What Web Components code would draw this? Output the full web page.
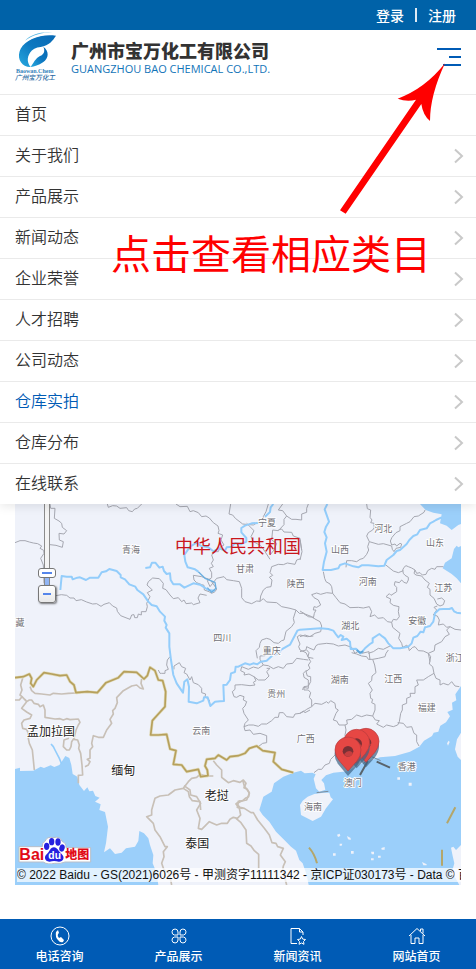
<!DOCTYPE html>
<html lang="zh-CN">
<head>
<meta charset="utf-8">
<meta name="viewport" content="width=device-width, initial-scale=1">
<title>广州市宝万化工有限公司</title>
<style>
    body{
        margin: 0;
        background: #fff;
        color: #333;
        font-family: "Liberation Sans", "Noto Sans CJK SC", sans-serif;
        font-size: 16px;
    }
</style>
</head>
<body>
<site-page>
    <top-bar slot="top"></top-bar>
    <site-header slot="header"></site-header>
    <site-menu slot="menu">
        <menu-item plain>首页</menu-item>
        <menu-item>关于我们</menu-item>
        <menu-item>产品展示</menu-item>
        <menu-item>新闻动态</menu-item>
        <menu-item>企业荣誉</menu-item>
        <menu-item>人才招聘</menu-item>
        <menu-item>公司动态</menu-item>
        <menu-item active>仓库实拍</menu-item>
        <menu-item>仓库分布</menu-item>
        <menu-item>在线联系</menu-item>
    </site-menu>
    <area-map></area-map>
    <tab-bar slot="tabs"></tab-bar>
    <guide-note slot="note">点击查看相应类目</guide-note>
</site-page>

<script>
class BaseElement extends HTMLElement{
    constructor(){
        super();
        this.attachShadow({mode: 'open'});
    }
    connectedCallback(){
        const template = document.createElement('template');
        template.innerHTML = `<style>${this.getStyles()}</style>${this.getTemplate()}`;
        this.shadowRoot.replaceChildren(template.content.cloneNode(true));
    }
}

class SitePage extends BaseElement{
    getTemplate(){
        return `
            <slot name="top"></slot>
            <slot name="header"></slot>
            <slot name="menu"></slot>
            <main><slot></slot></main>
            <slot name="tabs"></slot>
            <slot name="note"></slot>
        `;
    }
    getStyles(){
        return `
            :host{
                display: flex;
                flex-direction: column;
                position: relative;
                min-height: 100vh;
            }
            main{
                flex: 1;
                padding: 0 15px 16px;
            }
        `;
    }
}

class TopBar extends BaseElement{
    getTemplate(){
        return `<a href="#login">登录</a><i></i><a href="#register">注册</a>`;
    }
    getStyles(){
        return `
            :host{
                display: flex;
                justify-content: flex-end;
                align-items: center;
                gap: 11px;
                height: 30px;
                padding: 0 20px;
                background: #0062a8;
                font-size: 14px;
                font-weight: 500;
            }
            a{
                color: #fff;
                text-decoration: none;
            }
            i{
                width: 2px;
                height: 14px;
                background: #dfeaf4;
            }
        `;
    }
}

class SiteHeader extends BaseElement{
    getTemplate(){
        return `
            <a href="#home">
                <svg width="42" height="54" viewBox="42 87 126 162" aria-hidden="true">
                    <defs>
                        <linearGradient id="wing" x1="0" y1="1" x2="1" y2="0">
                            <stop offset="0" stop-color="#27a9df"/>
                            <stop offset=".5" stop-color="#0d78c0"/>
                            <stop offset="1" stop-color="#0869b4"/>
                        </linearGradient>
                    </defs>
                    <path fill="url(#wing)" d="M168 104C120 98 78 116 62 143C50 168 60 190 82 197L92 198C82 186 80 170 90 155C96 145 108 139 122 138C148 133 158 119 168 104Z"/>
                    <path fill="#55b5e2" d="M75 119C92 100 122 91 158 94C124 94 98 103 75 119Z"/>
                    <path fill="none" stroke="#fff" stroke-width="2" d="M84 118C108 103 138 98 165 101"/>
                    <path fill="url(#wing)" d="M130 137C148 151 147 171 129 184C116 193 103 197 92 198C100 187 107 171 120 165C132 160 136 150 130 137Z"/>
                    <text x="104" y="216" text-anchor="middle" font-family="Liberation Serif" font-weight="700" font-size="18" fill="#3382bb">Baowan.Chem</text>
                    <text x="105" y="237" text-anchor="middle" font-size="20" font-style="italic" font-weight="500" fill="#2467a2">广州宝万化工</text>
                </svg>
                <span class="name">
                    <strong>广州市宝万化工有限公司</strong>
                    <span>GUANGZHOU BAO CHEMICAL CO.,LTD.</span>
                </span>
            </a>
            <button aria-label="菜单"><i></i><i></i><i></i></button>
        `;
    }
    getStyles(){
        return `
            :host{
                display: flex;
                justify-content: space-between;
                align-items: center;
                height: 64px;
                padding: 0 15px 0 14px;
            }
            a{
                display: flex;
                gap: 15px;
                height: 56px;
                text-decoration: none;
                margin-bottom: 8px;
            }
            .name{
                display: flex;
                flex-direction: column;
                padding-top: 12px;
                white-space: nowrap;
            }
            strong{
                color: #333;
                font-size: 18px;
                font-weight: 900;
                line-height: 20px;
            }
            .name span{
                color: #1274b8;
                font-family: "Open Sans", sans-serif;
                font-size: 11px;
                font-weight: 500;
                line-height: 14px;
            }
            button{
                display: flex;
                flex-direction: column;
                align-items: flex-end;
                gap: 6px;
                width: 24px;
                padding: 0;
                border: 0;
                margin-bottom: 10px;
                background: none;
            }
            i{
                width: 18px;
                height: 2px;
                background: #005bb5;
            }
            i:nth-child(1){
                width: 24px;
            }
            i:nth-child(2){
                width: 12px;
            }
        `;
    }
}

class SiteMenu extends BaseElement{
    getTemplate(){
        return `<nav><slot></slot></nav>`;
    }
    getStyles(){
        return `
            :host{
                display: block;
                position: relative;
                z-index: 1;
                background: #fff;
                box-shadow: 0 2px 10px rgba(0, 0, 0, .1);
                clip-path: inset(0 0 -20px 0);
            }
        `;
    }
}

class MenuItem extends BaseElement{
    getTemplate(){
        return `
            <a href="#page">
                <slot></slot>
                <svg width="10" height="16" viewBox="0 0 10 16" aria-hidden="true">
                    <path d="M1 1.500L8 8L1 14.500" fill="none" stroke="#c9c9c9" stroke-width="2"/>
                </svg>
            </a>
        `;
    }
    getStyles(){
        return `
            :host{
                display: block;
                border-top: 1px solid #eaeaea;
            }
            a{
                display: flex;
                justify-content: space-between;
                align-items: center;
                height: 40px;
                padding: 0 12px 0 15px;
                color: #333;
                font-weight: 350;
                line-height: 22px;
                text-decoration: none;
            }
            :host([plain]) svg{
                display: none;
            }
            :host([active]) a{
                color: #005bb5;
            }
        `;
    }
}

// the map drawing uses three units to one pixel
const PLACES = [
    ['青海', 393, 1648], ['藏', 60, 1867], ['宁夏', 801, 1567], ['甘肃', 735, 1705],
    ['陕西', 887, 1752], ['四川', 667, 1914], ['重庆', 815, 1953], ['河北', 1150, 1587],
    ['山东', 1305, 1627], ['山西', 1020, 1648], ['河南', 1103, 1744], ['江苏', 1330, 1763],
    ['湖北', 1051, 1878], ['安徽', 1252, 1862], ['贵州', 829, 2081], ['云南', 604, 2193],
    ['湖南', 1019, 2040], ['江西', 1180, 2036], ['浙江', 1364, 1974], ['福建', 1280, 2122],
    ['广西', 917, 2217], ['香港', 1220, 2300], ['澳门', 1058, 2349], ['海南', 939, 2421]
];
const COUNTRIES = [
    ['孟加拉国', 153, 2195], ['缅甸', 370, 2311], ['老挝', 650, 2386], ['泰国', 592, 2531]
];
const PINS = [[1098, 2290], [1070, 2293], [1044, 2316]];
const FRONTIER = 'M45 2033L70 2030L88 2022L95 2035L92 2050L100 2060L110 2040L132 2018L155 2022L180 2027L200 2025L210 2045L222 2055L228 2078L262 2075L292 2078L318 2048L355 2033L372 2015L410 2017L432 2037L442 2027L450 2002L465 2012L475 2040L488 2042L497 2075L495 2120L475 2142L457 2162L452 2205L475 2205L500 2203L510 2247L528 2252L520 2293L545 2295L560 2315L595 2308L602 2330L624 2327L622 2310L615 2298L620 2278L645 2275L655 2265L680 2280L690 2270L715 2267L735 2260L748 2245L770 2238L788 2252L825 2258L820 2285L845 2308L880 2318';

class AreaMap extends BaseElement{
    getLabels(list, size){
        return list.map(([name, x, y]) =>
            `<text x="${x}" y="${y + Math.round(size * .36)}" font-size="${size}">${name}</text>`
        ).join('');
    }
    getPins(){
        return PINS.map(([x, y]) => `
            <g transform="translate(${x} ${y})">
                <path d="M0 12L-30 -24Q-42 -40 -40 -58A38 38 0 0 1 39 -52Q40 -35 26 -17Z" fill="#3f6483" opacity=".7"/>
                <path d="M0 -3L-25 -32Q-39 -48 -39 -66A39 39 0 0 1 39 -66Q39 -48 26 -32Z" fill="#e64744" stroke="#b53b3e" stroke-width="2"/>
                <circle cy="-62" r="16" fill="#793035"/>
                <path d="M-12 -53Q2 -70 15 -57Q12 -46 0 -46Q-8 -46 -12 -53Z" fill="#c43e3f"/>
            </g>`).join('');
    }
    getTemplate(){
        return `
            <svg class="map" viewBox="45 1512 1338 1143" role="img" aria-label="地图">
                <rect x="45" y="1512" width="1338" height="1143" fill="#eff2fa"/>
                <g fill="#9bcffa">
                    <path transform="translate(0 1950)" d="M45 357L60 353V363L100 362L122 350L132 354L152 346L163 351L178 345L185 335L196 318L208 324L214 345L218 372L232 380L238 405L252 423L262 412L268 424L279 422L286 438L299 443L285 455L302 463L298 480L315 486L324 530L318 580L312 607L330 595L345 612L365 608L378 595L405 590L415 573L418 543L432 550L445 565L450 585L460 615L458 640L470 670L475 705H45Z"/>
                    <path transform="translate(900 1500)" d="M360 12L377 30L400 38L425 43L420 70L440 77L455 90L475 75L483 72V12ZM483 250L470 235L455 222L428 205L435 188L455 175L462 147L470 137L475 142L483 138Z"/>
                    <path transform="translate(708 2340)" d="M172 -22L195 -28L206 -20L229 -22L239 -17L233 -4L240 25L250 35L268 29L264 10L256 0L270 -14L292 -22L335 -26L378 -50L432 -68L477 -72L522 -85L550 -100L564 -118L588 -132L593 -142L607 -145L613 -163L630 -173L642 -191L634 -204L650 -211L648 -232L661 -239L658 -257L675 -282V-142L663 -122L657 -92L665 -70L675 -60V195L660 210L652 200L645 203L650 228L655 250L648 275L670 315H218L212 285L200 250L190 240L180 212L165 200L145 180L120 155L100 125L80 105L70 90L82 50L107 35L114 10L142 -10Z"/>
                </g>
                <g fill="#eff2fa">
                    <path transform="translate(708 2340)" d="M192 75L200 62L215 50L235 42L262 38L280 38L284 52L291 58L270 85L255 110L230 123L195 105Z"/>
                    <path transform="translate(708 2340)" d="M303 164l8 -3l2 7l-7 3zM333 168l11 6v6l-8 -2zM311 191h8l-2 6h-6zM291 220h8v7h-8zM345 213h8v8h-8zM405 215h9v8h-7zM436 204l10 -3v8h-9zM405 235h8v6h-8zM426 227h8v6h-8zM558 246l14 7v3h-10zM518 8h9v9h-9zM484 -8h8v7h-8z"/>
                    <path d="M1341 2230l5 -8l3 4l-5 11z"/>
                </g>

                <g fill="none" stroke="#a6a8b1" stroke-width="3" stroke-linejoin="round">
                    <g transform="translate(0 1500)">
                        <path d="M45 128L60 122L75 122L88 126L100 129L113 131L125 138L120 145L131 151L132 160L122 175L130 195L132 250M150 12L152 25L165 25L163 55L177 63L185 70L187 82L200 92L192 102L177 100L178 120L190 125L187 142L168 136L150 134M322 12L325 22L338 17L350 18L360 25L380 23L386 32L397 35L404 27L412 25L425 12"/>
                        <path d="M168 287L184 284L200 286L210 294L222 294L228 302L244 299L260 306L278 312L290 311L303 319L312 313L328 308L338 318L350 324L352 334L362 347L372 351L390 358L395 345L402 344L404 353L412 353L415 342L424 345L424 335L438 335L442 320L440 310L450 290L442 278L457 270L441 255L445 245L458 234L478 236L490 250L488 265L498 269L510 285L520 296L535 293L545 305L552 300L558 311L575 309L580 314L600 308L594 294L600 282L620 286"/>
                    </g>
                    <g transform="translate(450 1500)">
                        <path d="M78 12L90 20L112 19L120 35L130 32L145 38L155 50L168 48L178 54L190 68L204 78L207 92L204 100L218 105L213 120L222 135L210 142L205 155L195 155L185 165L190 180L184 190L190 200L178 205L185 218L185 233L172 242L180 260L192 245L200 235L222 230L230 239L250 242L268 245L275 265L275 293L285 305L305 311L320 303L330 304L332 288L340 270L350 262L363 260L366 240L358 232L368 226L360 218L365 200L385 193L400 194L412 189L435 193L440 180L452 176M242 12L237 42L248 45L256 55L278 72L310 75L325 66L340 65L340 50L348 35L355 12M398 12L385 30L398 32L410 48L425 58L438 58L455 60L455 42L470 37L470 25L475 12M410 48L402 58L402 74L385 92L368 90L365 120L380 130L372 150L360 165M290 70L312 92L303 110L310 125L325 133L335 140L345 155L360 178M385 90L395 87L402 96L425 97L430 108L450 115L455 150"/>
                        <path d="M130 226L155 230L180 239L190 252L200 267L195 275L185 280L177 275L163 270L162 256L155 254L140 248L132 240ZM330 304L340 296L350 306L380 308L395 320L420 325L438 330L430 355L433 368L425 380L408 394L402 420L395 422L385 430L372 428L360 418L350 415L335 420L330 430L328 442L318 452L322 475M438 330L448 340L460 340L475 350L490 352M445 420L442 410L450 405L472 410L490 408M445 420L450 432L446 440L450 450L468 458L475 472L490 475"/>
                    </g>
                    <g transform="translate(900 1500)">
                        <path d="M200 12L202 26L212 30L210 52L216 60L212 68L222 70L222 84L218 90L205 98L200 108L208 125L203 140L206 150L200 163L190 175L180 178L170 185L155 182L140 182L138 202M208 125L235 133L250 131L275 138L277 148L282 155L288 145L302 142L305 132L300 130L290 138L285 132L275 135L271 123L276 112L288 98L300 92L300 80L320 70L330 65L342 50L355 48L372 37L375 30M0 120L6 155L0 180M70 215L74 235L78 245L90 252L95 260L98 280L80 278L62 283L50 279L35 284L42 293L55 300L62 315L50 322L42 320L40 330L48 330L43 340L40 355M98 280L108 293L120 308L135 312L150 323L175 322L190 324L208 320L215 335L210 350L224 345L234 355L250 353L262 365L275 367L280 358L290 360L298 350L295 335L297 320L280 316L270 308L272 297L258 290L268 281L273 286L290 275L290 262L283 255L285 245L298 248L305 240L312 247L320 250L325 240L325 232L315 226L310 220L308 210L312 202L318 197L325 200L335 204L345 210L350 220L360 218L367 225L378 223L383 212L395 205L405 208L410 200L430 200M310 212L295 218L280 213L270 205L255 193M345 210L342 220L348 225L365 228L375 240L388 250L382 262L390 268L390 285L402 295L410 312L420 318L430 314L434 302L425 294L412 297M0 333L15 342L35 350L45 357L60 365L65 378L62 395L45 400L30 410L15 405L0 410M412 318L402 322L410 330L400 345L412 348L418 360L415 375L430 372L440 382L450 380L465 388L483 390M275 367L278 382L300 400L296 415L305 430L308 442L320 436L325 440L328 452L338 442L345 440L355 452L370 453L385 460L388 475L390 485M450 380L440 390L448 403L435 410L425 425L405 435L403 452L385 460M0 455L18 450L20 440L30 445L42 450L48 437L55 433L80 430L100 432L115 438L135 435L155 442L165 460L175 454L185 460L207 455L210 480M205 460L220 455L235 445L250 448L270 438"/>
                    </g>
                    <g transform="translate(450 1950)">
                        <path d="M25 60L30 70L35 70L45 70L45 62L55 58L50 45L52 30L60 20M72 58L72 48L88 38L95 50L107 55L102 68L110 72L120 90L125 80L130 98L145 104L155 115L155 128L167 132L165 140L178 150L180 165M360 0L345 5L345 17L330 18L330 28L340 45L355 47L370 56L385 50L400 55L410 42L428 40L440 25L460 28L475 30M340 45L325 55L310 51L295 58L275 50L272 62L284 68L282 75L297 72L312 80L325 90L345 90L357 78L350 65L360 55L350 55M312 80L318 92L310 97L315 105L300 107L275 104L255 105L255 118L247 125L252 140L260 142L270 136L282 140L280 150L290 155L285 168L278 175L282 190L295 210L285 220L282 230L296 225L310 225L325 229L335 222L350 222L365 212L375 202L385 202L388 188L400 188L410 200L430 202L435 192L450 190L460 183L465 188L480 180M282 230L285 242L300 240L310 253L330 250L350 257L350 278L338 280L325 290M458 120L460 112L475 115L475 90L462 82L460 70L470 60"/>
                    </g>
                    <g transform="translate(900 1950)">
                        <path d="M20 0L27 8L24 20L32 35L25 45L30 55L18 65L22 78L32 80L32 95L25 108L12 110L12 120L25 120L32 128L28 142L35 150L35 170L20 178L12 184L0 190M35 170L45 160L65 163L80 155L85 160L92 152L105 160L107 175L115 180L108 190L100 210L110 213L117 225L135 225L142 222L140 210L155 208L170 195L185 200L200 195L218 198L225 180L225 163L215 158L218 148L212 145L210 130L217 120L205 100L215 92L216 78L228 68L224 45L218 28L205 28L200 20L185 18L170 12L155 8M218 198L226 210L238 212L230 222L250 232L260 225L280 230L293 225L298 215L302 190L307 180L307 165L320 160L320 145L332 140L330 130L345 130L345 110L355 105L350 90L370 90L385 80L402 70L408 85L420 90L420 105L430 100L445 105L455 95L465 108L478 110M402 70L398 50L388 42L392 20L385 10M218 28L235 25L255 20L258 10L265 0M293 218L310 220L320 232L335 230L342 250L350 255L350 275L357 288M135 225L138 240L135 255L138 270L128 285L120 300L105 315L92 328L88 340L75 345L65 358L55 358L42 368"/>
                    </g>
                    <path d="M950 2378L985 2374M1090 2290L1115 2270L1142 2282" stroke="#7c8c9b"/>
                </g>

                <g fill="none" stroke="#93cdfb" stroke-width="6" stroke-linejoin="round">
                    <path transform="translate(0 1500)" d="M181 270L185 228L200 230L215 230L218 238L232 233L240 232L258 240L270 233L295 233L305 217L318 214L328 207L350 213L362 225L362 232L375 238L388 253L406 260L412 270L430 283L445 305L455 315L470 319L480 335L495 350L493 362L500 375L497 383L508 400L508 440L513 480L520 525L530 550L549 578L553 545L562 538L567 560L566 605L590 610L610 602L612 592L623 592L631 618L645 605L660 604L672 603L670 555L680 554L690 540L693 520L705 516L707 500L715 500L735 490L750 494L760 490L772 493L782 485L800 482L818 466L835 460L845 448L870 434L892 392L900 389L962 385L985 387L1000 392L1008 403L1015 412L1022 405L1030 410L1025 420L1040 416L1050 425L1052 447L1068 446L1082 460L1095 445L1110 432L1118 427L1118 415L1138 402L1148 410L1155 415L1165 430L1180 445L1200 445L1225 440L1235 430L1240 413L1252 408L1262 395L1270 397L1275 382L1290 378L1300 365L1305 340L1318 328L1330 327L1348 327L1356 324L1362 334L1370 338L1383 340"/>
                    <path transform="translate(0 1500)" d="M436 204L450 202L456 188L466 188L478 203L488 200L492 213L500 222L510 220L512 240L520 253L540 253L553 263L580 250L600 254L625 270L645 272M595 215L585 208L563 202L556 185L553 165L570 140L590 128L603 138L625 142L640 154L657 145L675 152L680 142L695 140L705 130L722 133L739 125L739 114L724 97L724 84L735 77L755 70L775 69M795 50L810 36L812 22L820 12M982 12L974 28L987 65L978 80L973 96L980 112L975 130L980 155L972 185L968 210L993 210L1015 205L1020 195L1035 190L1060 199L1075 202L1085 196L1105 196L1120 197L1135 199L1153 197L1160 180L1180 165L1190 153L1200 150L1220 132L1228 120L1240 108L1252 103L1260 90L1280 85L1290 70L1300 65L1308 60L1325 52"/>
                    <path transform="translate(0 1950)" d="M153 282L160 290L165 300L178 325L185 342" stroke-width="5"/>
                    <path transform="translate(900 1950)" d="M170 0L180 8L190 4" stroke="#5ea6d9"/>
                    <path transform="translate(450 1500)" d="M145 215L165 235L195 247L198 265L185 277L172 263" stroke="#6aaee0" stroke-width="4"/>
                </g>

                <g fill="none" stroke="#c8c0b7" stroke-width="5" stroke-linejoin="round">
                    <path transform="translate(0 1950)" d="M68 85L62 105L66 120L60 135L66 140L58 150L45 150M66 140L80 155L65 175L80 186L95 195L90 205L72 210L65 220L68 235L80 238L85 250L85 265L88 280L97 300L103 360M75 148L80 155L88 150L95 150L102 160L115 163L120 170L130 165L135 180L135 202L165 207L180 206L190 210L200 206L210 209L235 207L240 217L235 225L228 240L222 265L215 275L213 290L208 300L200 300L190 290L192 270L207 265M222 268L233 270L238 285L236 295L242 310L246 345L248 375L235 376L235 400M90 110L95 122L105 130L125 132L150 135L160 130L185 132L205 130L228 129M425 87L423 100L430 117L420 114L410 105L395 108L370 122L350 143L352 158L345 175L338 182L340 192L330 208L335 220L320 240L310 262L295 262L280 257L275 280L278 290L270 300L270 325L262 328L270 335L265 345L255 350M640 378L618 378L600 373L590 382L575 385L565 395L550 415L525 420L505 435L480 438L465 445L455 480L455 495L440 500L460 520L465 540L480 560L495 590L502 590L490 605L492 620L485 640L492 660L505 665L510 680L515 705"/>
                    <path transform="translate(450 1950)" d="M190 332L200 345L215 360L215 382L225 390L235 398L250 392L270 397L280 390L288 400L282 413L292 418L298 430L290 450L275 453L265 458L262 472L278 475M100 415L115 425L118 440L127 452L150 455L152 480"/>
                    <path transform="translate(0 2340)" d="M552 17L570 30L572 45L590 50L602 70L590 90L600 115L595 145L605 148L628 125L650 135L665 130L682 130L690 118L700 112L712 115L722 105L718 85L708 72L720 62"/>
                    <path transform="translate(708 2340)" d="M0 115L15 128L30 150L32 190L45 198L55 212L68 223L68 265M0 70L12 82L25 85L45 98L52 98L65 120L85 145L100 165L108 188L120 190L125 200L142 205L133 225L148 245L142 258L140 270L152 315M20 0L25 18L40 38L38 50L28 55L20 62L5 65"/>
                </g>
                <g fill="none" stroke-linejoin="round">
                    <path stroke="#e0dab9" stroke-width="9" d="${FRONTIER}"/>
                    <path stroke="#b6a05c" stroke-width="5" d="${FRONTIER}"/>
                </g>
                <g fill="none" stroke="#b4a66a" stroke-width="6">
                    <path d="M1366 2422L1341 2470M1326 2549V2597M927 2543Q944 2562 951 2590"/>
                </g>

                <g text-anchor="middle" fill="#707077" stroke="#fff" stroke-width="5" paint-order="stroke">${this.getLabels(PLACES, 27)}</g>
                <g text-anchor="middle" fill="#222" stroke="#fff" stroke-width="5" paint-order="stroke">${this.getLabels(COUNTRIES, 36)}</g>
                <g text-anchor="middle" fill="#c9161d">${this.getLabels([['中华人民共和国', 714, 1641]], 54)}</g>

                <path d="M1080 2325L1103 2284M1130 2285L1170 2303" stroke="#59636b" stroke-width="6"/>
                ${this.getPins()}
            </svg>
            <div class="zoom">
                <input type="range" min="0" max="100" value="90" aria-label="缩放级别">
                <button aria-label="缩小"></button>
            </div>
            <div class="credits">
                <a href="#baidu" aria-label="百度地图">
                    <svg width="76" height="28" viewBox="0 0 228 84">
                        <path fill="#fff" stroke="#b9bec8" stroke-width="3" d="M6 32H76Q74 20 84 16Q90 0 108 5Q130 -1 135 16Q148 21 147 35H221V78H144Q132 84 113 82Q92 87 79 78H6Z"/>
                        <text x="7" y="73" font-size="48" font-weight="700" fill="#e10b16">Bai</text>
                        <g fill="#2521df">
                            <ellipse cx="89" cy="31" rx="8" ry="11"/>
                            <ellipse cx="104" cy="17" rx="8" ry="11"/>
                            <ellipse cx="123" cy="18" rx="8" ry="11"/>
                            <ellipse cx="135" cy="36" rx="8" ry="11" transform="rotate(15 135 36)"/>
                            <path d="M111 34C121 34 124 46 134 54C146 66 137 78 125 77Q111 73 98 77C83 78 80 62 89 55C98 48 99 34 111 34Z"/>
                        </g>
                        <text x="94" y="70" font-size="31" font-weight="700" fill="#fff">du</text>
                        <text x="145" y="69" font-size="36" font-weight="900" fill="#e10b16">地图</text>
                    </svg>
                </a>
                <p>© 2022 Baidu - GS(2021)6026号 - 甲测资字11111342 - 京ICP证030173号 - Data © 百度</p>
            </div>
        `;
    }
    getStyles(){
        return `
            :host{
                display: block;
                position: relative;
                overflow: hidden;
            }
            .map{
                display: block;
                width: 100%;
            }
            .zoom{
                position: absolute;
                top: 0;
                left: 23px;
                display: flex;
                flex-direction: column;
                align-items: center;
            }
            input{
                appearance: none;
                writing-mode: vertical-lr;
                width: 18px;
                height: 81px;
                margin: 0;
                background:
                    linear-gradient(#92b6f5, #92b6f5) 7px 74px / 4px 7px no-repeat,
                    linear-gradient(90deg, transparent 6px, #8b8b8b 6px 7px, #f4f4f4 7px 11px, #8b8b8b 11px 12px, transparent 12px);
            }
            input::-webkit-slider-thumb{
                appearance: none;
                width: 18px;
                height: 10px;
                border: 1px solid #777;
                border-radius: 3px;
                background: linear-gradient(#5686ea, #5686ea) center / 10px 2px no-repeat #fff;
            }
            button{
                width: 18px;
                height: 18px;
                padding: 0;
                border: 1px solid #777;
                border-radius: 3px;
                background: linear-gradient(#5686ea, #5686ea) center / 8px 2px no-repeat, linear-gradient(#fff, #e8e8e8);
                box-shadow: 1px 1px 2px rgba(0, 0, 0, .5);
            }
            .credits{
                position: absolute;
                left: 2px;
                right: 0;
                bottom: 3px;
            }
            .credits a, .credits svg{
                display: block;
            }
            .credits a{
                margin-bottom: 4px;
            }
            p{
                overflow: hidden;
                margin: 0;
                background: rgba(255, 255, 255, .7);
                color: #111;
                font-size: 12px;
                line-height: 14px;
                white-space: nowrap;
            }
        `;
    }
}

const TABS = [
    ['电话咨询', '<circle cx="10" cy="10" r="9"/><path fill="#fff" stroke="none" d="M8 4l-2 2q-1 5 2 8q2 3 5 2l1-2-3-3-2 1q-2-2-1-4l1-1z"/>'],
    ['产品展示', '<path d="M9 9H5.500a3 3 0 1 1 3.500-3zM11 9V6a3 3 0 1 1 3.500 3zM9 11v3a3 3 0 1 1-3.500-3zM11 11h3.500a3 3 0 1 1-3.500 3z"/>'],
    ['新闻资讯', '<path d="M9 17.500H3V2.500H11.500L15 6V9M11.500 2.500V6H15M13.500 10.500l1.200 2.600 2.800.4-2 2 .5 2.800-2.500-1.300-2.500 1.300.5-2.800-2-2 2.800-.4z"/>'],
    ['网站首页', '<path d="M2 10L10 2.500L18 10M4 9V17.500H8V12H12V17.500H16V9M13.500 5V3H16V7.500"/>']
];

class TabBar extends BaseElement{
    getTemplate(){
        return TABS.map(([label, icon]) => `
            <a href="#tab">
                <svg width="20" height="20" viewBox="0 0 20 20" fill="none" stroke="#fff" aria-hidden="true">${icon}</svg>
                <span>${label}</span>
            </a>`).join('');
    }
    getStyles(){
        return `
            :host{
                display: flex;
                position: sticky;
                bottom: 0;
                z-index: 2;
                height: 50px;
                background: #005bb5;
            }
            a{
                display: flex;
                flex: 1;
                flex-direction: column;
                align-items: center;
                gap: 2px;
                padding-top: 7px;
                color: #fff;
                font-size: 12px;
                font-weight: 500;
                line-height: 18px;
                text-decoration: none;
            }
        `;
    }
}

class GuideNote extends BaseElement{
    getTemplate(){
        return `
            <svg width="108" height="152" viewBox="27 189 324 456" aria-hidden="true">
                <path fill="#f00" d="M345 190Q285 266 203 296Q230 306 258 299L30 631L47 641L274 312Q279 346 300 363Q300 286 345 190Z"/>
            </svg>
            <span><slot></slot></span>
        `;
    }
    getStyles(){
        return `
            :host{
                display: flex;
                flex-direction: column;
                align-items: flex-end;
                gap: 10px;
                position: absolute;
                top: 63px;
                right: 29px;
                z-index: 2;
                color: #f00;
                font-size: 40px;
                line-height: 60px;
                pointer-events: none;
            }
            span{
                padding-right: 16px;
            }
        `;
    }
}

customElements.define('site-page', SitePage);
customElements.define('top-bar', TopBar);
customElements.define('site-header', SiteHeader);
customElements.define('site-menu', SiteMenu);
customElements.define('menu-item', MenuItem);
customElements.define('area-map', AreaMap);
customElements.define('tab-bar', TabBar);
customElements.define('guide-note', GuideNote);
</script>
</body>
</html>
